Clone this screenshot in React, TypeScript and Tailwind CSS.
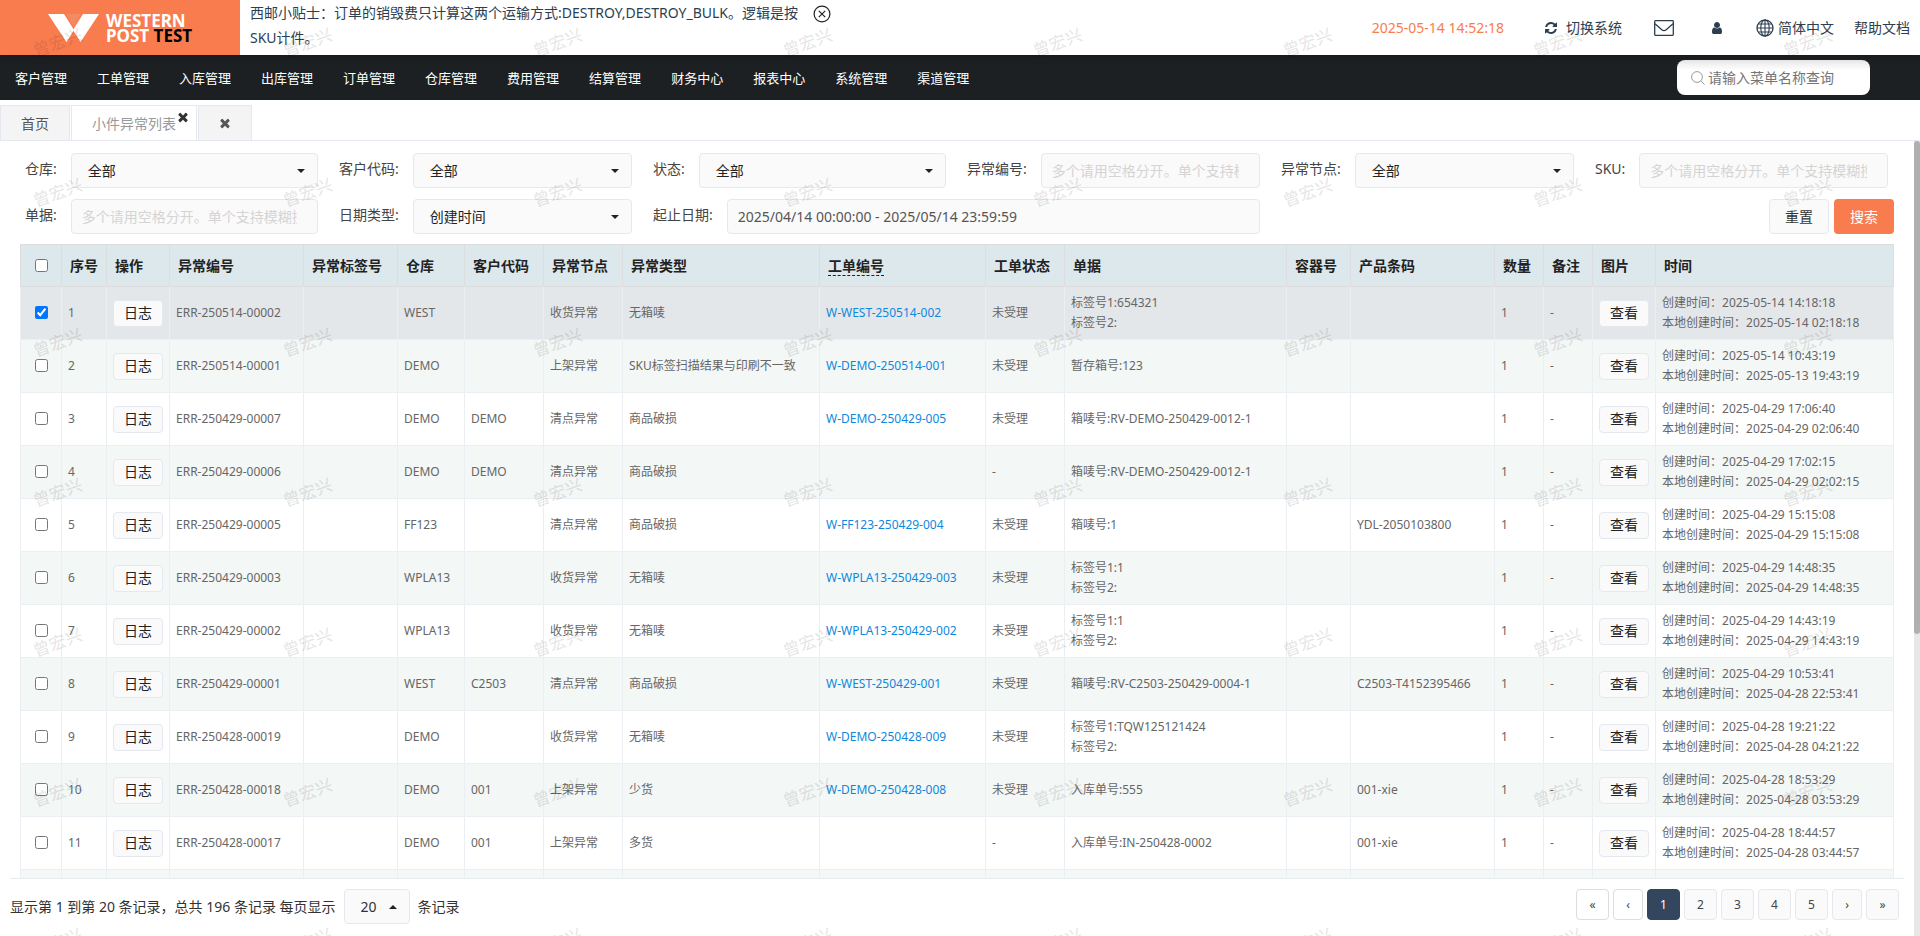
import React from "react";

const MENU = ["客户管理", "工单管理", "入库管理", "出库管理", "订单管理", "仓库管理", "费用管理", "结算管理", "财务中心", "报表中心", "系统管理", "渠道管理"];

const HINT = "多个请用空格分开。单个支持模糊搜索";

type Row = {
  id: string;
  wh: string;
  client?: string;
  node: string;
  type: string;
  order?: string;
  doc: string[];
  barcode?: string;
  created: string;
  local: string;
};

const ROWS: Row[] = [
  { id: "ERR-250514-00002", wh: "WEST", node: "收货异常", type: "无箱唛", order: "W-WEST-250514-002", doc: ["标签号1:654321", "标签号2:"], created: "2025-05-14 14:18:18", local: "2025-05-14 02:18:18" },
  { id: "ERR-250514-00001", wh: "DEMO", node: "上架异常", type: "SKU标签扫描结果与印刷不一致", order: "W-DEMO-250514-001", doc: ["暂存箱号:123"], created: "2025-05-14 10:43:19", local: "2025-05-13 19:43:19" },
  { id: "ERR-250429-00007", wh: "DEMO", client: "DEMO", node: "清点异常", type: "商品破损", order: "W-DEMO-250429-005", doc: ["箱唛号:RV-DEMO-250429-0012-1"], created: "2025-04-29 17:06:40", local: "2025-04-29 02:06:40" },
  { id: "ERR-250429-00006", wh: "DEMO", client: "DEMO", node: "清点异常", type: "商品破损", doc: ["箱唛号:RV-DEMO-250429-0012-1"], created: "2025-04-29 17:02:15", local: "2025-04-29 02:02:15" },
  { id: "ERR-250429-00005", wh: "FF123", node: "清点异常", type: "商品破损", order: "W-FF123-250429-004", doc: ["箱唛号:1"], barcode: "YDL-2050103800", created: "2025-04-29 15:15:08", local: "2025-04-29 15:15:08" },
  { id: "ERR-250429-00003", wh: "WPLA13", node: "收货异常", type: "无箱唛", order: "W-WPLA13-250429-003", doc: ["标签号1:1", "标签号2:"], created: "2025-04-29 14:48:35", local: "2025-04-29 14:48:35" },
  { id: "ERR-250429-00002", wh: "WPLA13", node: "收货异常", type: "无箱唛", order: "W-WPLA13-250429-002", doc: ["标签号1:1", "标签号2:"], created: "2025-04-29 14:43:19", local: "2025-04-29 14:43:19" },
  { id: "ERR-250429-00001", wh: "WEST", client: "C2503", node: "清点异常", type: "商品破损", order: "W-WEST-250429-001", doc: ["箱唛号:RV-C2503-250429-0004-1"], barcode: "C2503-T4152395466", created: "2025-04-29 10:53:41", local: "2025-04-28 22:53:41" },
  { id: "ERR-250428-00019", wh: "DEMO", node: "收货异常", type: "无箱唛", order: "W-DEMO-250428-009", doc: ["标签号1:TQW125121424", "标签号2:"], created: "2025-04-28 19:21:22", local: "2025-04-28 04:21:22" },
  { id: "ERR-250428-00018", wh: "DEMO", client: "001", node: "上架异常", type: "少货", order: "W-DEMO-250428-008", doc: ["入库单号:555"], barcode: "001-xie", created: "2025-04-28 18:53:29", local: "2025-04-28 03:53:29" },
  { id: "ERR-250428-00017", wh: "DEMO", client: "001", node: "上架异常", type: "多货", doc: ["入库单号:IN-250428-0002"], barcode: "001-xie", created: "2025-04-28 18:44:57", local: "2025-04-28 03:44:57" },
];

function Logo() {
  return (
    <svg viewBox="0 0 51 28" className="h-7 w-[51px]" aria-hidden="true">
      <path d="M0 0h16l10 16-7.500 12z" fill="#fff" />
      <path d="M35 0h16L32.500 28 25 16z" fill="#fff" />
      <path d="M18 0h15l-7.500 12.500z" fill="#f28a66" />
    </svg>
  );
}

function RefreshIcon() {
  return (
    <svg viewBox="0 0 1792 1792" className="size-3.5" fill="currentColor" aria-hidden="true">
      <path d="M1639 1056q0 5-1 7-64 268-268 434.500t-478 166.500q-146 0-282.500-55t-243.500-157l-129 129q-19 19-45 19t-45-19-19-45v-448q0-26 19-45t45-19h448q26 0 45 19t19 45-19 45l-137 137q71 66 161 102t187 36q134 0 250-65t186-179q11-17 53-117 8-23 30-23h192q13 0 22.500 9.500t9.500 22.500zm25-800v448q0 26-19 45t-45 19h-448q-26 0-45-19t-19-45 19-45l138-138q-148-137-349-137-134 0-250 65t-186 179q-11 17-53 117-8 23-30 23h-199q-13 0-22.500-9.500t-9.500-22.500v-7q65-268 270-434.500t480-166.500q146 0 284 55.500t245 156.500l130-129q19-19 45-19t45 19 19 45z" />
    </svg>
  );
}

function UserIcon() {
  return (
    <svg viewBox="0 0 1792 1792" className="size-3.5" fill="currentColor" aria-hidden="true">
      <path d="M1536 1399q0 109-62.500 187t-150.500 78h-854q-88 0-150.500-78t-62.500-187q0-85 8.500-160.500t31.500-152 58.500-131 94-89 134.500-34.500q131 128 313 128t313-128q76 0 134.500 34.500t94 89 58.500 131 31.500 152 8.500 160.500zm-256-887q0 159-112.500 271.500t-271.500 112.500-271.500-112.500-112.500-271.500 112.500-271.500 271.500-112.500 271.500 112.500 112.500 271.500z" />
    </svg>
  );
}

function TimesIcon() {
  return (
    <svg viewBox="0 0 1792 1792" className="size-3.5" fill="currentColor" aria-hidden="true">
      <path d="M1490 1322q0 40-28 68l-136 136q-28 28-68 28t-68-28l-294-294-294 294q-28 28-68 28t-68-28l-136-136q-28-28-28-68t28-68l294-294-294-294q-28-28-28-68t28-68l136-136q28-28 68-28t68 28l294 294 294-294q28-28 68-28t68 28l136 136q28 28 28 68t-28 68l-294 294 294 294q28 28 28 68z" />
    </svg>
  );
}

function MailIcon() {
  return (
    <svg viewBox="0 0 20 16" className="h-4 w-5" fill="none" stroke="currentColor" strokeWidth="1.300" aria-hidden="true">
      <rect x=".7" y=".7" width="18.600" height="14.600" rx=".8" />
      <path d="M1 3.800l6.500 5.700c1.500 1.300 3.500 1.300 5 0L19 3.800" />
    </svg>
  );
}

function GlobeIcon() {
  return (
    <svg viewBox="0 0 18 18" className="size-[18px]" fill="none" stroke="currentColor" strokeWidth="1.100" aria-hidden="true">
      <circle cx="9" cy="9" r="8" strokeWidth="1.300" />
      <ellipse cx="9" cy="9" rx="4.200" ry="8" />
      <path d="M9 1v16M1 9h16M2.300 5h13.400M2.300 13h13.400" />
    </svg>
  );
}

function CloseCircle() {
  return (
    <svg viewBox="0 0 18 18" className="size-[18px]" fill="none" stroke="#222" strokeWidth="1.200" aria-hidden="true">
      <circle cx="9" cy="9" r="7.900" />
      <path d="M5.800 5.800l6.400 6.400M12.200 5.800l-6.400 6.400" />
    </svg>
  );
}

function SearchIcon() {
  return (
    <svg viewBox="0 0 14 14" className="size-3.5 shrink-0" fill="none" stroke="#999" aria-hidden="true">
      <circle cx="6" cy="6" r="5.400" />
      <path d="M10 10.200l3.500 3.300" />
    </svg>
  );
}

function Caret({ up }: { up?: boolean }) {
  return (
    <svg viewBox="0 0 8 4" className="pointer-events-none absolute right-[13px] top-1/2 h-1 w-2 -translate-y-1/2" fill="#222" aria-hidden="true">
      <path d={up ? "M0 4h8L4 0z" : "M0 0h8L4 4z"} />
    </svg>
  );
}

const BOX = "h-[35px] w-full rounded-sm border border-[#e6e8f0] bg-[#fafafa] text-sm";

function Field({ id, label, children, wide }: { id: string; label: string; children: React.ReactNode; wide?: boolean }) {
  return (
    <div className={wide ? "col-span-2 flex" : "flex"}>
      <label htmlFor={id} className="shrink-0 pr-3.5 text-sm leading-8 text-[#444]">{label}:</label>
      <div className="relative min-w-0 flex-1">{children}</div>
    </div>
  );
}

function Select({ id, value }: { id: string; value: string }) {
  return (
    <>
      <select id={id} className={`${BOX} appearance-none px-4 text-[#222]`}>
        <option>{value}</option>
      </select>
      <Caret />
    </>
  );
}

function TextBox({ id }: { id: string }) {
  return <input id={id} type="text" placeholder={HINT} className={`${BOX} pl-2.5 pr-5 placeholder:text-[#d4d4d4]`} />;
}

const COLS: [string, string][] = [
  ["序号", "w-[45px]"],
  ["操作", "w-[63px]"],
  ["异常编号", "w-[134px]"],
  ["异常标签号", "w-[94px]"],
  ["仓库", "w-[67px]"],
  ["客户代码", "w-[79px]"],
  ["异常节点", "w-[79px]"],
  ["异常类型", "w-[197px]"],
  ["工单编号", "w-[166px]"],
  ["工单状态", "w-[79px]"],
  ["单据", "w-[222px]"],
  ["容器号", "w-[64px]"],
  ["产品条码", "w-[144px]"],
  ["数量", "w-[49px]"],
  ["备注", "w-[49px]"],
  ["图片", "w-[63px]"],
  ["时间", "w-auto"],
];

const TD = "border border-[#ebeef2] px-1.5 py-0";

function CellButton({ children }: { children: React.ReactNode }) {
  return (
    <button type="button" className="block h-[27px] w-[50px] rounded-sm border border-[#e6e8f0] bg-[#fafafa] text-sm leading-6 text-[#222]">
      {children}
    </button>
  );
}

function ErrorTable() {
  return (
    <table className="w-full table-fixed border-collapse border border-[#ddd] text-left text-xs leading-5 text-[#666]">
      <thead>
        <tr className="h-[42px] bg-[#dde8ed] text-sm text-[#222]">
          <th className="w-[41px] border border-[#ddd] pb-[3px] text-center">
            <input type="checkbox" aria-label="全选" className="m-0 size-[13px] align-middle" />
          </th>
          {COLS.map(([name, width]) => (
            <th key={name} className={`${width} whitespace-nowrap border border-[#ddd] px-2 font-bold`}>
              {name === "工单编号" ? <span className="border-b border-dashed border-[#222]">{name}</span> : name}
            </th>
          ))}
        </tr>
      </thead>
      <tbody>
        {ROWS.map((r, i) => (
          <tr key={r.id} className={`h-[53px] whitespace-nowrap ${i === 0 ? "bg-[#e4e7ea]" : i % 2 ? "bg-[#f3f7f6]" : "bg-white"}`}>
            <td className="border border-[#ebeef2] pb-[3px] text-center">
              <input type="checkbox" defaultChecked={i === 0} aria-label={r.id} className="m-0 size-[13px] align-middle" />
            </td>
            <td className={TD}>{i + 1}</td>
            <td className={TD}><CellButton>日志</CellButton></td>
            <td className={TD}>{r.id}</td>
            <td className={TD} />
            <td className={TD}>{r.wh}</td>
            <td className={TD}>{r.client}</td>
            <td className={TD}>{r.node}</td>
            <td className={TD}>{r.type}</td>
            <td className={TD}>{r.order && <a href="#" className="text-[#0e88dd]">{r.order}</a>}</td>
            <td className={TD}>{r.order ? "未受理" : "-"}</td>
            <td className={TD}>{r.doc.map((d) => <div key={d}>{d}</div>)}</td>
            <td className={TD} />
            <td className={TD}>{r.barcode}</td>
            <td className={TD}>1</td>
            <td className={TD}>-</td>
            <td className={TD}><CellButton>查看</CellButton></td>
            <td className={TD}>
              <div>创建时间：{r.created}</div>
              <div>本地创建时间：{r.local}</div>
            </td>
          </tr>
        ))}
        <tr className="h-[53px] bg-[#f3f7f6]">
          {Array.from({ length: 18 }, (_, i) => <td key={i} className={TD} />)}
        </tr>
      </tbody>
    </table>
  );
}

function Watermark() {
  return (
    <div aria-hidden="true" className="pointer-events-none absolute inset-0 z-20 grid select-none auto-rows-[150px] grid-cols-[repeat(8,250px)] overflow-hidden">
      {Array.from({ length: 56 }, (_, i) => (
        <div key={i} className="pl-8 pt-[30px]">
          <span className="block w-14 -rotate-20 text-[17px] font-medium leading-6 text-black/10">曾宏兴</span>
        </div>
      ))}
    </div>
  );
}

const PAGE = "h-[31px] rounded-sm border text-xs";

export default function App() {
  return (
    <div className="relative flex h-screen flex-col overflow-hidden bg-white font-['Noto_Sans','Noto_Sans_CJK_SC',sans-serif] text-sm text-[#333]">
      <header className="relative z-10 flex h-[55px] shrink-0 text-[#2c3e50] shadow-md">
        <div className="flex w-60 items-center bg-[#f97c4f] pl-12">
          <Logo />
          <div className="pl-[7px] text-[17px]/[15px] font-bold text-white">
            <div>WESTERN</div>
            <div>POST <span className="text-black">TEST</span></div>
          </div>
        </div>
        <div className="flex items-start pl-2.5">
          <p className="w-[563px] whitespace-nowrap leading-[25px]">
            西邮小贴士：订单的销毁费只计算这两个运输方式:DESTROY,DESTROY_BULK。逻辑是按<br />SKU计件。
          </p>
          <button type="button" aria-label="关闭" className="mt-[5px]"><CloseCircle /></button>
        </div>
        <div className="ml-auto flex items-center pr-2.5 leading-5">
          <time className="mr-10 text-[#f97c4f]">2025-05-14 14:52:18</time>
          <button type="button" className="mr-8 flex items-center gap-2"><RefreshIcon />切换系统</button>
          <button type="button" aria-label="消息" className="mr-9"><MailIcon /></button>
          <button type="button" aria-label="用户" className="mr-8"><UserIcon /></button>
          <button type="button" className="mr-5 flex items-center gap-1"><GlobeIcon />简体中文</button>
          <a href="#">帮助文档</a>
        </div>
      </header>

      <nav className="flex h-[45px] shrink-0 items-center bg-[#1d2023] pr-[50px]">
        {MENU.map((m) => (
          <a key={m} href="#" className="px-[15px] text-[13px] leading-5 text-white">{m}</a>
        ))}
        <div className="ml-auto flex h-[35px] w-[193px] items-center gap-[3px] rounded-lg bg-white bg-linear-to-b from-[#e8e8e8] to-white to-30% pl-3.5">
          <SearchIcon />
          <input type="text" aria-label="菜单查询" placeholder="请输入菜单名称查询" className="w-full text-sm placeholder:text-[#757575]" />
        </div>
      </nav>

      <div className="mt-[5px] flex h-9 shrink-0 gap-px border-b border-[#e6e8f0] leading-9">
        <a href="#" className="border border-b-0 border-[#e6e8f0] bg-[#f4f4f4] px-5 text-[#555]">首页</a>
        <div className="relative border border-b-0 border-[#e6e8f0] px-5 text-[#999]">
          小件异常列表
          <button type="button" aria-label="关闭标签" className="absolute right-1.5 top-1 text-[#333]"><TimesIcon /></button>
        </div>
        <div className="flex items-center border border-b-0 border-[#e6e8f0] bg-[#f4f4f4] px-[19px] text-[#555]">
          <button type="button" aria-label="关闭全部"><TimesIcon /></button>
        </div>
      </div>

      <div className="flex min-h-0 flex-1">
        <main className="flex min-w-0 flex-1 flex-col">
          <form className="grid grid-cols-6 gap-x-[21px] gap-y-[11px] pl-[25px] pr-[26px] pt-3" onSubmit={(e) => e.preventDefault()}>
            <Field id="wh" label="仓库"><Select id="wh" value="全部" /></Field>
            <Field id="client" label="客户代码"><Select id="client" value="全部" /></Field>
            <Field id="state" label="状态"><Select id="state" value="全部" /></Field>
            <Field id="code" label="异常编号"><TextBox id="code" /></Field>
            <Field id="node" label="异常节点"><Select id="node" value="全部" /></Field>
            <Field id="sku" label="SKU"><TextBox id="sku" /></Field>
            <Field id="doc" label="单据"><TextBox id="doc" /></Field>
            <Field id="dtype" label="日期类型"><Select id="dtype" value="创建时间" /></Field>
            <Field id="range" label="起止日期" wide>
              <input id="range" type="text" defaultValue="2025/04/14 00:00:00 - 2025/05/14 23:59:59" className={`${BOX} px-2.5 text-[#555]`} />
            </Field>
            <div className="col-span-2 -mr-1.5 flex justify-end gap-[5px]">
              <button type="reset" className="h-[35px] w-[60px] rounded-sm border border-[#e6e8f0] bg-[#fafafa] text-[#333]">重置</button>
              <button type="submit" className="h-[35px] w-[60px] rounded-sm bg-[#f97c4f] text-white">搜索</button>
            </div>
          </form>

          <div className="mt-2.5 min-h-0 flex-1 overflow-hidden pl-5 pr-5">
            <ErrorTable />
          </div>

          <footer className="ml-2.5 mr-2.5 flex h-[58px] shrink-0 items-start border-t border-[#e8ebf0] pt-2.5">
            <div className="flex items-center gap-2">
              <span>显示第 1 到第 20 条记录，总共 196 条记录 每页显示</span>
              <div className="relative">
                <select aria-label="每页显示" className="h-[35px] w-[66px] appearance-none rounded-sm border border-[#e6e8f0] bg-[#fafafa] pl-4 text-sm">
                  <option>20</option>
                </select>
                <Caret up />
              </div>
              <span>条记录</span>
            </div>
            <div className="ml-auto flex gap-1 pr-[5px] text-[#444]">
              <button type="button" className={`${PAGE} w-[33px] border-[#ddd]`}>«</button>
              <button type="button" className={`${PAGE} w-[30px] border-[#ddd]`}>‹</button>
              <button type="button" className={`${PAGE} w-[33px] border-[#34465e] bg-[#34465e] text-white`}>1</button>
              {[2, 3, 4, 5].map((n) => (
                <button key={n} type="button" className={`${PAGE} w-[33px] border-[#e6e8f0] bg-[#fafafa]`}>{n}</button>
              ))}
              <button type="button" className={`${PAGE} w-[30px] border-[#e6e8f0] bg-[#fafafa]`}>›</button>
              <button type="button" className={`${PAGE} w-[33px] border-[#e6e8f0] bg-[#fafafa]`}>»</button>
            </div>
          </footer>
        </main>
        <div aria-hidden="true" className="w-1.5 shrink-0 bg-[#e8e8e8]">
          <div className="h-[62%] rounded-full bg-[#b0b0b0]" />
        </div>
      </div>
      <Watermark />
    </div>
  );
}
